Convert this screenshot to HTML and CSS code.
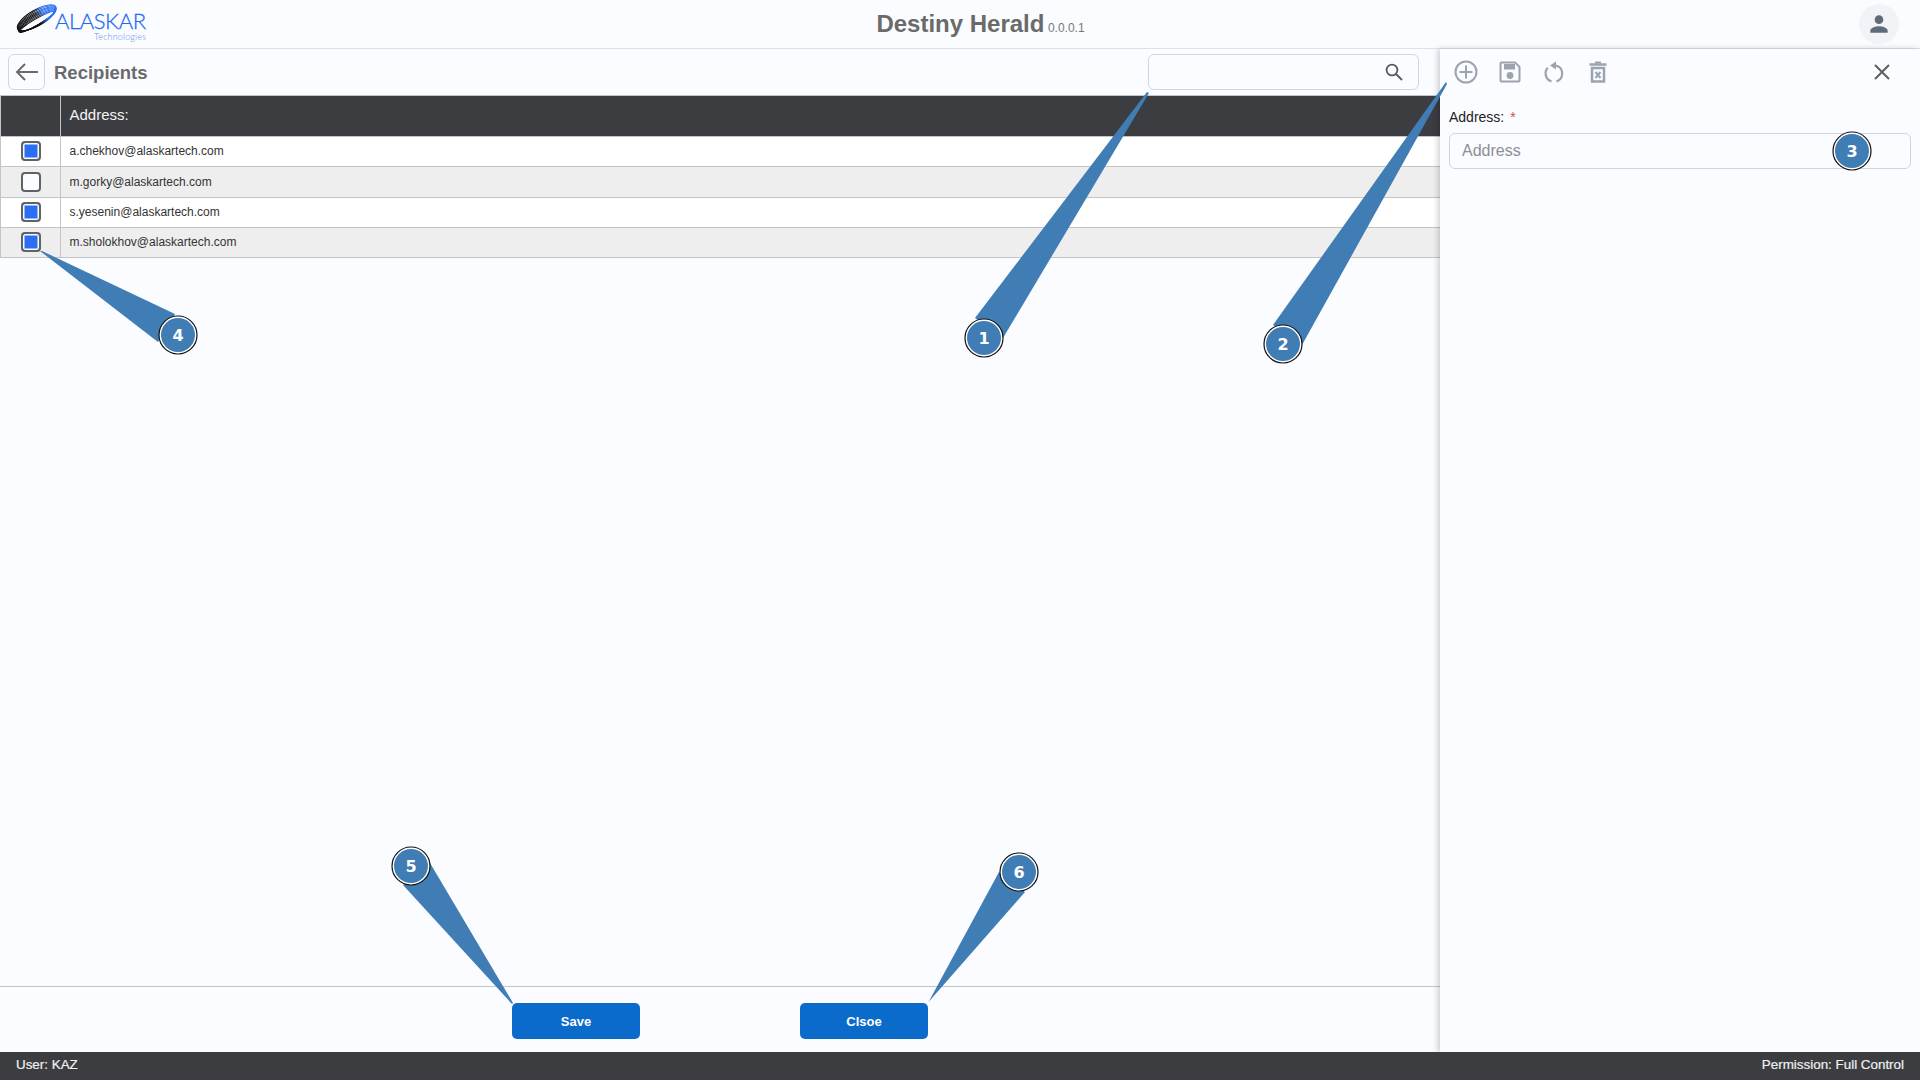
FILE: index.html
```html
<!DOCTYPE html>
<html>
<head>
    <meta charset="UTF-8">
    <title>Destiny Herald</title>
    <link rel="stylesheet" href="styles.css">
</head>
<body>
    <header class="top-bar">
        <svg class="logo" width="150" height="44" viewBox="0 0 150 44">
            <defs>
                <linearGradient id="swoosh" gradientUnits="userSpaceOnUse" x1="-22" y1="0" x2="22" y2="0">
                    <stop offset="0.56" stop-color="#111111"></stop>
                    <stop offset="0.76" stop-color="#2a6ff0"></stop>
                </linearGradient>
            </defs>
            <g transform="translate(20.500 20) rotate(-30)" fill="none" stroke="url(#swoosh)" stroke-width="1">
                <ellipse cx="0" cy="0" rx="20" ry="3"></ellipse>
                <ellipse cx="0.400" cy="-0.500" rx="20.300" ry="3.700"></ellipse>
                <ellipse cx="0.800" cy="-1" rx="20.600" ry="4.400"></ellipse>
                <ellipse cx="1.100" cy="-1.500" rx="20.900" ry="5.100"></ellipse>
                <ellipse cx="1.400" cy="-2" rx="21.200" ry="5.800"></ellipse>
                <ellipse cx="1.700" cy="-2.500" rx="21.500" ry="6.500"></ellipse>
                <ellipse cx="2" cy="-3" rx="21.800" ry="7.200"></ellipse>
                <ellipse cx="2.300" cy="-3.500" rx="22" ry="7.900"></ellipse>
            </g>
            <text class="logo-name" x="39" y="27" textLength="91">ALASKAR</text>
            <text class="logo-sub" x="78" y="38" textLength="52">Technologies</text>
        </svg>
        <div class="app-title">
            <span class="app-name">Destiny Herald</span>
            <span class="app-version">0.0.0.1</span>
        </div>
        <div class="top-right">
            <div class="avatar">
                <svg width="26" height="26" viewBox="0 0 24 24" fill="#5f6b7a">
                    <path d="M12 12c2.21 0 4-1.79 4-4s-1.79-4-4-4-4 1.79-4 4 1.79 4 4 4zm0 2c-2.67 0-8 1.34-8 4v2h16v-2c0-2.66-5.33-4-8-4z"></path>
                </svg>
            </div>
        </div>
    </header>

    <div class="main">
        <div class="content">
            <div class="toolbar">
                <button class="back-button">
                    <svg width="26" height="26" viewBox="0 0 26 26" fill="none" stroke="#6b6b6b" stroke-width="2">
                        <path d="M24 13H3M11 5l-8 8 8 8"></path>
                    </svg>
                </button>
                <h1 class="page-title">Recipients</h1>
                <div class="search-box">
                    <svg width="20" height="20" viewBox="0 0 20 20" fill="none" stroke="#555b63" stroke-width="1.8">
                        <circle cx="8" cy="8" r="5.4"></circle>
                        <path d="M12 12l6 6"></path>
                    </svg>
                </div>
            </div>

            <table class="grid">
                <thead>
                    <tr>
                        <th class="check-col"></th>
                        <th>Address:</th>
                    </tr>
                </thead>
                <tbody>
                    <tr>
                        <td class="check-col"><span class="check checked"></span></td>
                        <td>a.chekhov@alaskartech.com</td>
                    </tr>
                    <tr class="alt">
                        <td class="check-col"><span class="check"></span></td>
                        <td>m.gorky@alaskartech.com</td>
                    </tr>
                    <tr>
                        <td class="check-col"><span class="check checked"></span></td>
                        <td>s.yesenin@alaskartech.com</td>
                    </tr>
                    <tr class="alt">
                        <td class="check-col"><span class="check checked"></span></td>
                        <td>m.sholokhov@alaskartech.com</td>
                    </tr>
                </tbody>
            </table>

            <div class="actions">
                <button class="action-button">Save</button>
                <button class="action-button">Clsoe</button>
            </div>
        </div>

        <aside class="side-panel">
            <div class="panel-tools">
                <svg class="tool" width="24" height="24" viewBox="0 0 24 24" fill="none" stroke="#9aa3ae" stroke-width="2">
                    <circle cx="12" cy="12" r="10.5"></circle>
                    <path d="M12 5.5v13M5.5 12h13"></path>
                </svg>
                <svg class="tool" width="24" height="24" viewBox="0 0 24 24" fill="#9aa3ae">
                    <path fill-rule="evenodd" d="M3.5 1.5h14l5 5v14a2 2 0 0 1-2 2h-17a2 2 0 0 1-2-2v-17a2 2 0 0 1 2-2zm0 2v17h17V7.3l-3.8-3.8z"></path>
                    <path d="M6 4h11v5.500H6z"></path>
                    <circle cx="12" cy="15.500" r="3.400"></circle>
                </svg>
                <svg class="tool" width="24" height="24" viewBox="0 0 24 24" fill="none" stroke="#9aa3ae" stroke-width="2.200">
                    <path d="M14 5.500A8.300 8.300 0 0 1 14.500 21.400"></path>
                    <path d="M5.800 7.800A8.300 8.300 0 0 0 9.500 21.400"></path>
                    <path d="M14 1.500L8 5.500l6 4z" fill="#9aa3ae" stroke="none"></path>
                </svg>
                <svg class="tool" width="24" height="24" viewBox="0 0 24 24" fill="none" stroke="#9aa3ae" stroke-width="2.500">
                    <path d="M3.500 4.500h17"></path>
                    <path d="M9 2.500h6" stroke-width="2"></path>
                    <path d="M6 8h12v13.500H6z"></path>
                    <path d="M9.500 12l5 6M14.500 12l-5 6" stroke-width="2"></path>
                </svg>
                <svg class="close-icon" width="18" height="18" viewBox="0 0 18 18" fill="none" stroke="#5f5f5f" stroke-width="2">
                    <path d="M2 2l14 14M16 2L2 16"></path>
                </svg>
            </div>
            <label class="field-label">Address: <span class="required">*</span></label>
            <input class="field-input" type="text" placeholder="Address">
        </aside>
    </div>

    <footer class="status-bar">
        <span>User: KAZ</span>
        <span>Permission: Full Control</span>
    </footer>

    <!-- numbered callouts over the screen -->
    <svg class="callouts" width="1920" height="1080" viewBox="0 0 1920 1080">
        <g class="wedge">
            <polygon points="1147,92 1149,93 1003,338 975,318"></polygon>
            <polygon points="1446,82 1447,84 1302,345 1273,325"></polygon>
            <polygon points="40,251 42,251 175,314 158,342"></polygon>
            <polygon points="512,1004 513,1003 430,863 403,885"></polygon>
            <polygon points="928,1003 928.500,1002 1025,892 999,872"></polygon>
        </g>
        <g class="badge"><circle cx="984" cy="338" r="19" class="ring"></circle><circle cx="984" cy="338" r="17"></circle><text x="984" y="344">1</text></g>
        <g class="badge"><circle cx="1283" cy="344" r="19" class="ring"></circle><circle cx="1283" cy="344" r="17"></circle><text x="1283" y="350">2</text></g>
        <g class="badge"><circle cx="1852" cy="151" r="19" class="ring"></circle><circle cx="1852" cy="151" r="17"></circle><text x="1852" y="157">3</text></g>
        <g class="badge"><circle cx="178" cy="335" r="19" class="ring"></circle><circle cx="178" cy="335" r="17"></circle><text x="178" y="341">4</text></g>
        <g class="badge"><circle cx="411" cy="866" r="19" class="ring"></circle><circle cx="411" cy="866" r="17"></circle><text x="411" y="872">5</text></g>
        <g class="badge"><circle cx="1019" cy="872" r="19" class="ring"></circle><circle cx="1019" cy="872" r="17"></circle><text x="1019" y="878">6</text></g>
    </svg>
</body>
</html>
```

FILE: styles.css
```css
* {
    box-sizing: border-box;
}

body {
    margin: 0;
    height: 100vh;
    display: flex;
    flex-direction: column;
    font-family: "Liberation Sans", Arial, sans-serif;
    background-color: #fbfcff;
    overflow: hidden;
}

.top-bar {
    height: 49px;
    flex-shrink: 0;
    display: grid;
    grid-template-columns: 1fr auto 1fr;
    align-items: center;
    border-bottom: 1px solid #dde1e6;
    padding: 0 21px 0 16px;
}

.logo {
    display: block;
}

.logo-name {
    font-family: Lato, "Liberation Sans", sans-serif;
    font-weight: 300;
    font-size: 22px;
    fill: #1f6bf0;
    stroke: #1f6bf0;
    stroke-width: 0.3;
}

.logo-sub {
    font-family: Lato, "Liberation Sans", sans-serif;
    font-weight: 300;
    font-size: 9px;
    fill: #5f8fe8;
}

.app-title {
    padding-left: 46px;
    white-space: nowrap;
}

.app-name {
    font-size: 24px;
    font-weight: bold;
    color: #6a6a6a;
}

.app-version {
    margin-left: -1px;
    font-size: 12px;
    color: #777777;
}

.top-right {
    display: flex;
    justify-content: flex-end;
}

.avatar {
    width: 40px;
    height: 40px;
    border-radius: 50%;
    background-color: #f1f3f6;
    display: flex;
    align-items: center;
    justify-content: center;
}

.main {
    flex: 1;
    display: flex;
    min-height: 0;
}

.content {
    width: 1440px;
    display: flex;
    flex-direction: column;
}

.toolbar {
    height: 46px;
    flex-shrink: 0;
    display: flex;
    align-items: center;
    padding: 0 21px 0 8px;
}

.back-button {
    width: 37px;
    height: 36px;
    padding: 0;
    display: flex;
    align-items: center;
    justify-content: center;
    background-color: transparent;
    border: 1px solid #ccd7e4;
    border-radius: 6px;
}

.page-title {
    margin: 2px 0 0 9px;
    font-size: 18.500px;
    font-weight: bold;
    color: #6a6a6a;
    flex: 1;
}

.search-box {
    width: 271px;
    height: 36px;
    display: flex;
    align-items: center;
    justify-content: flex-end;
    padding-right: 14px;
    border: 1px solid #ccd7e4;
    border-radius: 6px;
}

.grid {
    width: 100%;
    border-collapse: collapse;
    table-layout: fixed;
    font-size: 12px;
    color: #333333;
}

.grid th {
    height: 41px;
    padding: 0 8.500px 4px;
    background-color: #3c3d41;
    color: #f4f4f4;
    font-size: 15px;
    font-weight: normal;
    text-align: left;
    border: 1px solid #c4c4c4;
    border-right: none;
}

.grid td {
    height: 30px;
    padding: 0 8.500px 1px;
    background-color: #ffffff;
    border: 1px solid #c4c4c4;
    border-right: none;
}

.grid tr:nth-child(2) td {
    height: 31px;
}

.grid .alt td {
    background-color: #eeeeee;
}

.grid .check-col {
    width: 60px;
    padding: 0 0 1px;
    text-align: center;
}

.check {
    display: block;
    width: 20px;
    height: 20px;
    margin: 0 auto;
    background-color: #fbfcff;
    border: 2.500px solid #5f6368;
    border-radius: 4px;
}

.check.checked {
    background-color: #2b6ef2;
    box-shadow: inset 0 0 0 1.500px #fbfcff;
}

.actions {
    margin-top: auto;
    height: 66px;
    flex-shrink: 0;
    display: flex;
    justify-content: center;
    gap: 160px;
    padding-top: 16px;
    border-top: 1px solid #c4c4c4;
}

.action-button {
    width: 128px;
    height: 36px;
    background-color: #0b6bcb;
    color: #ffffff;
    border: none;
    border-radius: 5px;
    font-family: "Liberation Sans", Arial, sans-serif;
    font-size: 13px;
    font-weight: bold;
}

.side-panel {
    width: 480px;
    padding: 0 9px;
    box-shadow: -2px 0 6px rgba(0, 0, 0, 0.2);
    position: relative;
    display: flex;
    flex-direction: column;
}

.panel-tools {
    display: flex;
    align-items: center;
    gap: 20px;
    height: 46px;
    padding-left: 5px;
}

.close-icon {
    margin-left: auto;
    margin-right: 20px;
}

.field-label {
    margin-top: 14px;
    font-size: 14px;
    color: #222222;
}

.required {
    color: #e04646;
    margin-left: 2px;
}

.field-input {
    margin-top: 8px;
    height: 36px;
    padding: 0 12px;
    font-family: "Liberation Sans", Arial, sans-serif;
    font-size: 16px;
    background-color: transparent;
    border: 1px solid #ccd7e4;
    border-radius: 6px;
}

.field-input::placeholder {
    color: #8a8f96;
}

.status-bar {
    height: 28px;
    flex-shrink: 0;
    display: flex;
    align-items: center;
    justify-content: space-between;
    padding: 0 16px 3px;
    background-color: #3c3d41;
    color: #f0f0f0;
    font-size: 13.400px;
    -webkit-text-stroke: 0.2px #f0f0f0;
    position: relative;
}

.callouts {
    position: absolute;
    left: 0;
    top: 0;
    pointer-events: none;
}

.wedge polygon {
    fill: #417db5;
}

.badge circle {
    fill: #417db5;
}

.badge .ring {
    fill: #ffffff;
    stroke: #111111;
    stroke-width: 1.200;
}

.badge text {
    fill: #ffffff;
    font-family: "DejaVu Sans", sans-serif;
    font-size: 16px;
    font-weight: bold;
    text-anchor: middle;
}
```
